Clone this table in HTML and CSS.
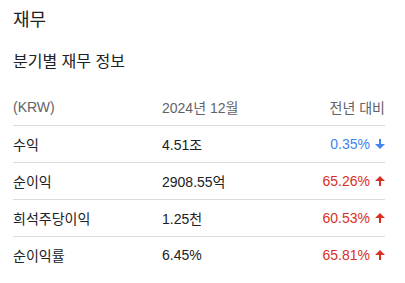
FILE: index.html
```html
<!DOCTYPE html>
<html lang="ko">
<head>
<meta charset="utf-8">
<link rel="stylesheet" href="styles.css">
</head>
<body>
<div class="page">
  <h1 class="title">재무</h1>
  <h2 class="subtitle">분기별 재무 정보</h2>
  <div class="table">
    <div class="row head">
      <div class="c1">(KRW)</div>
      <div class="c2">2024년 12월</div>
      <div class="c3">전년 대비</div>
    </div>
    <div class="row">
      <div class="c1">수익</div>
      <div class="c2">4.51조</div>
      <div class="c3 down">0.35%<svg class="arr" viewBox="0 0 10 10"><path d="M4 0h2v5h4l-5 5-5-5h4z"/></svg></div>
    </div>
    <div class="row">
      <div class="c1">순이익</div>
      <div class="c2">2908.55억</div>
      <div class="c3 up">65.26%<svg class="arr" viewBox="0 0 10 10"><path d="M4 10h2V5h4L5 0 0 5h4z"/></svg></div>
    </div>
    <div class="row">
      <div class="c1">희석주당이익</div>
      <div class="c2">1.25천</div>
      <div class="c3 up">60.53%<svg class="arr" viewBox="0 0 10 10"><path d="M4 10h2V5h4L5 0 0 5h4z"/></svg></div>
    </div>
    <div class="row last">
      <div class="c1">순이익률</div>
      <div class="c2">6.45%</div>
      <div class="c3 up">65.81%<svg class="arr" viewBox="0 0 10 10"><path d="M4 10h2V5h4L5 0 0 5h4z"/></svg></div>
    </div>
  </div>
</div>
</body>
</html>
```

FILE: styles.css
```css
html, body {
  margin: 0;
  padding: 0;
  background: #fff;
}
body {
  font-family: "Liberation Sans", Arial, "Noto Sans CJK KR", sans-serif;
  color: #202124;
}
.page {
  padding: 8px 20px 0 13px;
}
.title {
  margin: 0;
  font-size: 18px;
  font-weight: 400;
  line-height: 24px;
}
.subtitle {
  margin: 18px 0 0 0;
  font-size: 16px;
  font-weight: 400;
  line-height: 24px;
}
.table {
  margin-top: 15px;
}
.row {
  display: grid;
  grid-template-columns: 149px 1fr 120px;
  align-items: center;
  height: 36px;
  border-bottom: 1px solid #dadce0;
  font-size: 14px;
}
.row.last {
  border-bottom: none;
}
.row.head {
  color: #5f6368;
}
.c3 {
  text-align: right;
  display: flex;
  justify-content: flex-end;
  align-items: center;
}
.arr {
  width: 10px;
  height: 10px;
  margin-left: 5px;
  fill: currentColor;
}
.down { color: #4285f4; }
.up { color: #d93025; }
```
